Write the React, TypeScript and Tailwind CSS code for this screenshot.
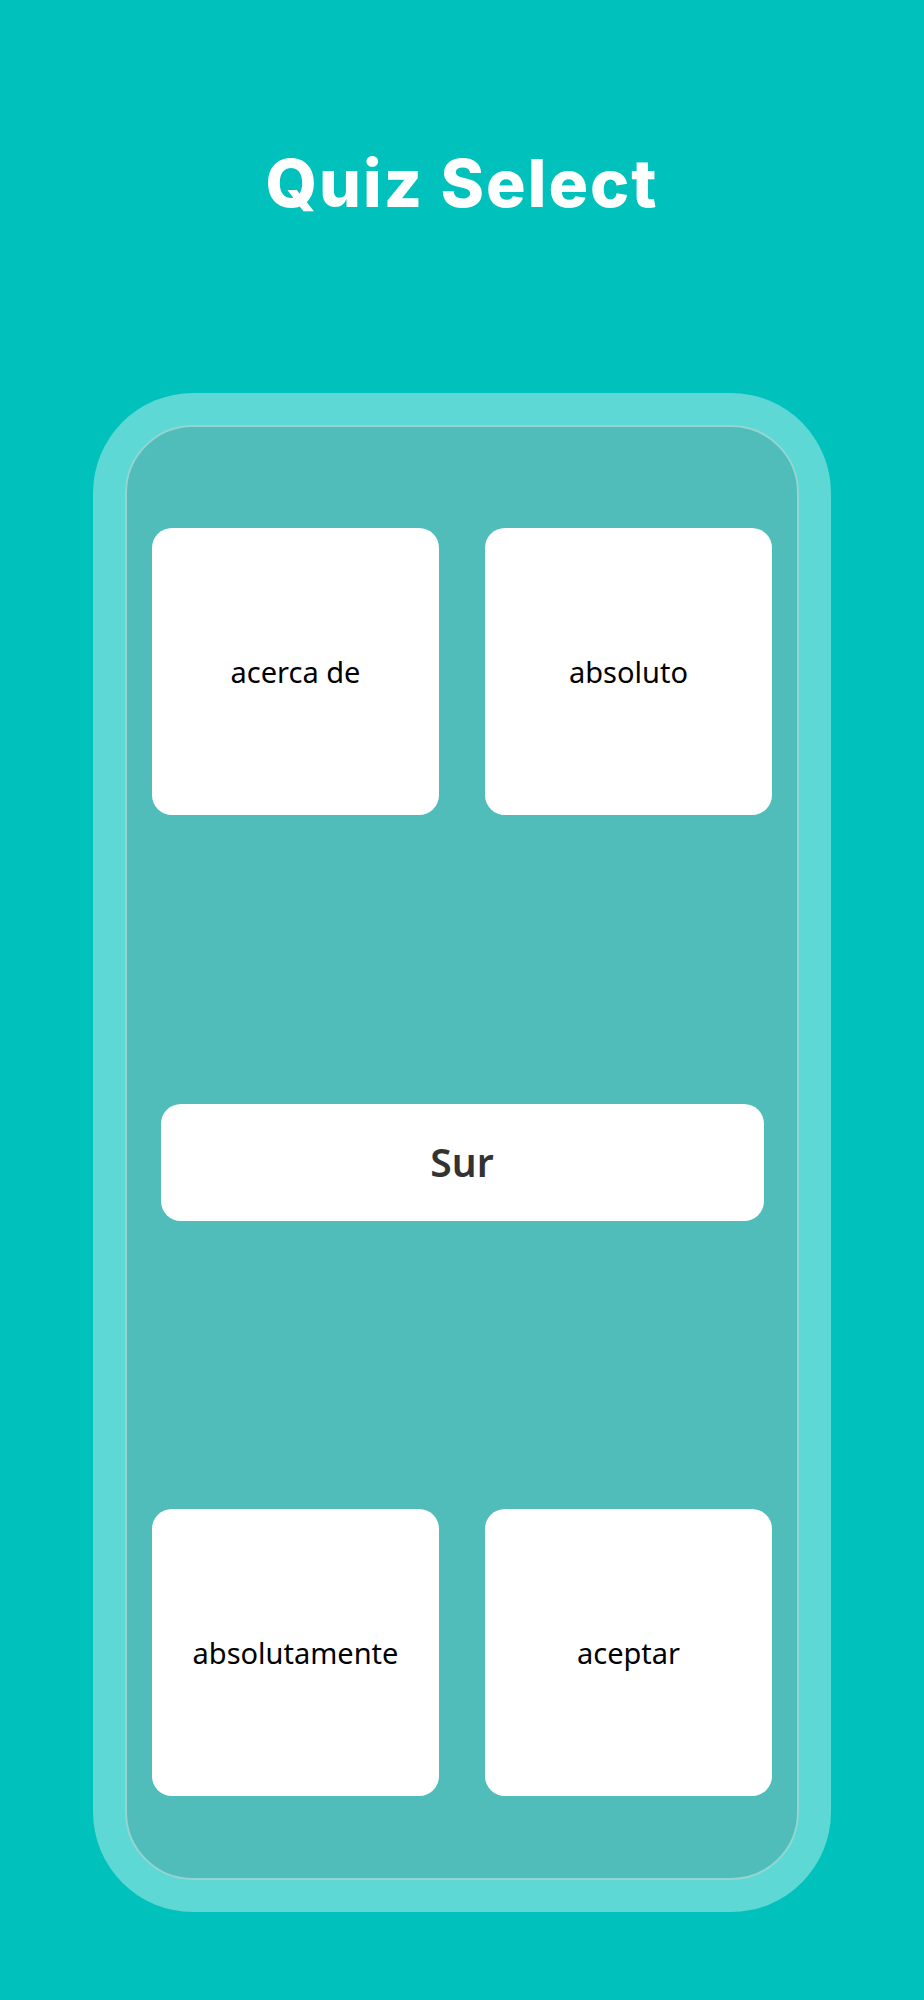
const Card = ({ label }: { label: string }) => (
  <button className="flex h-[287px] w-[287px] items-center justify-center rounded-[20px] bg-white text-[29px] text-black font-['Noto_Sans',sans-serif]">
    {label}
  </button>
);

export default function App() {
  return (
    <div className="flex min-h-[2000px] w-full flex-col items-center bg-[#00c1bc]">
      <h1 className="mt-[140px] text-[66px] font-extrabold leading-[86px] tracking-[2px] text-white font-['Inter',sans-serif]">
        Quiz Select
      </h1>
      <div className="mt-[167px] h-[1519px] w-[738px] rounded-[100px] bg-[#5dd8d4] p-[32px]">
        <div className="flex h-full w-full flex-col justify-between rounded-[68px] border-2 border-[#93d5d2] bg-[#50bdba] px-[25px] pb-[82px] pt-[101px]">
          <div className="flex justify-between">
            <Card label="acerca de" />
            <Card label="absoluto" />
          </div>
          <div className="flex justify-center">
            <button className="flex h-[117px] w-[603px] items-center justify-center rounded-[20px] bg-white text-[39px] font-semibold text-[#333333] font-['Noto_Sans',sans-serif]">
              Sur
            </button>
          </div>
          <div className="flex justify-between">
            <Card label="absolutamente" />
            <Card label="aceptar" />
          </div>
        </div>
      </div>
    </div>
  );
}
